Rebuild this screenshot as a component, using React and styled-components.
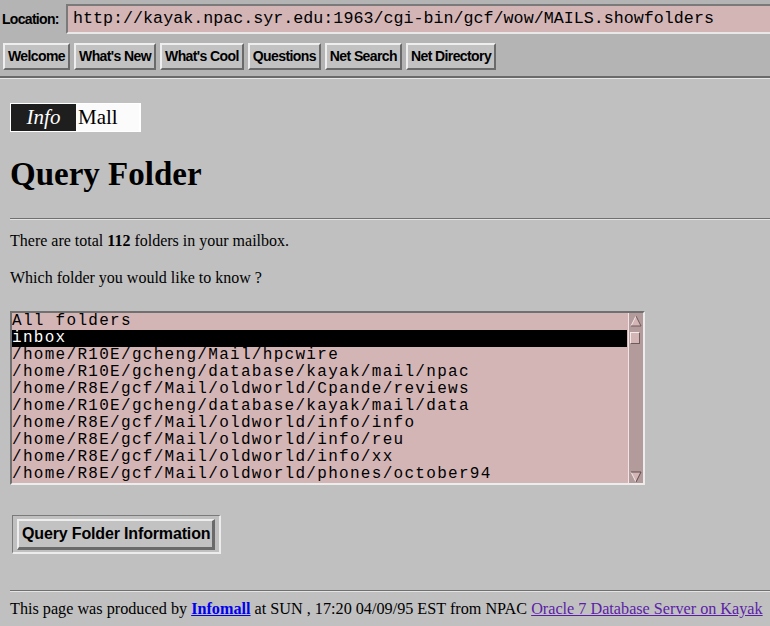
import React from "react";
import styled, { createGlobalStyle } from "styled-components";

const GlobalStyle = createGlobalStyle`
  html, body { margin: 0; padding: 0; background: #c0c0c0; }
  body { font-family: "Liberation Serif", "Times New Roman", serif; color: #000; overflow: hidden; }
`;

const folders = [
  "All folders",
  "inbox",
  "/home/R10E/gcheng/Mail/hpcwire",
  "/home/R10E/gcheng/database/kayak/mail/npac",
  "/home/R8E/gcf/Mail/oldworld/Cpande/reviews",
  "/home/R10E/gcheng/database/kayak/mail/data",
  "/home/R8E/gcf/Mail/oldworld/info/info",
  "/home/R8E/gcf/Mail/oldworld/info/reu",
  "/home/R8E/gcf/Mail/oldworld/info/xx",
  "/home/R8E/gcf/Mail/oldworld/phones/october94",
];

const navButtons = ["Welcome", "What's New", "What's Cool", "Questions", "Net Search", "Net Directory"];

const Chrome = styled.div`
  background: #b4b4b4;
  height: 76px;
  border-bottom: 2px solid #6a6a6a;
  box-shadow: 0 1px 0 #e6e6e6;
  overflow: hidden;
`;

const LocationRow = styled.div`
  display: flex;
  align-items: center;
  height: 38px;
  padding-left: 2px;
`;

const Label = styled.span`
  font-family: "Liberation Sans", Arial, sans-serif;
  font-weight: bold;
  font-size: 14px;
  letter-spacing: -0.7px;
  width: 64px;
`;

const UrlField = styled.div`
  flex: 1;
  height: 26px;
  margin-top: -1px;
  background: #d3b5b6;
  border-top: 2px solid #7a7a7a;
  border-left: 2px solid #7a7a7a;
  border-bottom: 2px solid #e8e8e8;
  font-family: "Liberation Mono", "Courier New", monospace;
  font-size: 16.7px;
  line-height: 26px;
  padding-left: 5px;
  white-space: nowrap;
`;

const ButtonRow = styled.div`
  display: flex;
  gap: 4px;
  padding: 5px 0 0 3px;
`;

const NavButton = styled.div`
  height: 23px;
  padding: 0 3px;
  background: #c2c2c2;
  border-top: 2px solid #eeeeee;
  border-left: 2px solid #eeeeee;
  border-bottom: 2px solid #6a6a6a;
  border-right: 2px solid #6a6a6a;
  font-family: "Liberation Sans", Arial, sans-serif;
  font-weight: bold;
  font-size: 14px;
  letter-spacing: -0.6px;
  line-height: 23px;
  white-space: nowrap;
`;

const Page = styled.div`
  padding: 25px 0 0 10px;
`;

const Logo = styled.div`
  display: inline-flex;
  height: 27px;
  border: 1px solid #fff;
  border-right-width: 2px;
  font-size: 21px;
  line-height: 27px;
`;

const LogoPart = styled.span`
  display: block;
  width: ${(p) => p.$w}px;
  background: ${(p) => (p.$dark ? "#1e1e1e" : "#fbfbfb")};
  color: ${(p) => (p.$dark ? "#fff" : "#000")};
  font-style: ${(p) => (p.$dark ? "italic" : "normal")};
  text-align: ${(p) => (p.$dark ? "center" : "left")};
  padding-left: ${(p) => (p.$dark ? 0 : 2)}px;
  box-sizing: border-box;
`;

const Title = styled.h1`
  margin: 23px 0 0;
  font-size: 33px;
  line-height: 38px;
  font-weight: bold;
`;

const Rule = styled.div`
  margin-top: ${(p) => p.$top}px;
  height: 1px;
  background: #707070;
  border-bottom: 1px solid #e4e4e4;
`;

const Para = styled.p`
  margin: ${(p) => p.$top}px 0 0;
  font-size: 16px;
  line-height: 17px;
`;

const ListBox = styled.div`
  margin-top: 25px;
  width: 631px;
  height: 170px;
  display: grid;
  grid-template-columns: 1fr 15px;
  background: #d3b5b6;
  border-top: 2px solid #707070;
  border-left: 2px solid #707070;
  border-bottom: 2px solid #ececec;
  border-right: 2px solid #ececec;
`;

const Options = styled.div`
  font-family: "Liberation Mono", "Courier New", monospace;
  font-size: 16px;
  letter-spacing: 1.3px;
  line-height: 17px;
  padding-right: 1px;
`;

const Option = styled.div`
  height: 17px;
  white-space: nowrap;
  overflow: hidden;
  background: ${(p) => (p.$selected ? "#000" : "transparent")};
  color: ${(p) => (p.$selected ? "#fff" : "#000")};
`;

const Scrollbar = styled.div`
  background: #b39b9c;
  border-left: 1px solid #f0e4e4;
  display: flex;
  flex-direction: column;
  justify-content: space-between;
  align-items: center;
`;

const Thumb = styled.div`
  width: 8px;
  height: 10px;
  margin-top: 1px;
  border: 1px solid #f4e8e8;
  border-right-color: #6e5a5a;
  border-bottom-color: #6e5a5a;
  background: #d3b5b6;
`;

const Arrow = ({ down }) => (
  <svg width="12" height="12" viewBox="0 0 12 12">
    {down ? (
      <>
        <polygon points="1,1 11,1 6,11" fill="#d3b5b6" />
        <polyline points="1,1 6,11" stroke="#f4e8e8" fill="none" />
        <polyline points="1,1 11,1 6,11" stroke="#5e4a4a" fill="none" />
      </>
    ) : (
      <>
        <polygon points="6,1 11,11 1,11" fill="#d3b5b6" />
        <polyline points="1,11 6,1" stroke="#f4e8e8" fill="none" />
        <polyline points="6,1 11,11 1,11" stroke="#6e5a5a" fill="none" />
      </>
    )}
  </svg>
);

const SubmitFrame = styled.div`
  display: inline-block;
  margin: 30px 0 0 2px;
  padding: 3px 4px 2px 4px;
  border-top: 1px solid #7a7a7a;
  border-left: 1px solid #7a7a7a;
  border-bottom: 2px solid #ececec;
  border-right: 2px solid #ececec;
`;

const SubmitButton = styled.div`
  height: 26px;
  padding: 0 2px 0 3px;
  background: #c2c2c2;
  border-top: 2px solid #eeeeee;
  border-left: 2px solid #eeeeee;
  border-bottom: 3px solid #6a6a6a;
  border-right: 3px solid #6a6a6a;
  font-family: "Liberation Sans", Arial, sans-serif;
  font-weight: bold;
  font-size: 16px;
  letter-spacing: -0.15px;
  line-height: 26px;
  white-space: nowrap;
`;

const Footer = styled.p`
  margin: 9px 0 0;
  font-size: 16.2px;
  line-height: 17px;
  white-space: nowrap;
`;

const Link = styled.a`
  color: ${(p) => (p.$visited ? "#5c1ea8" : "#0000ee")};
  font-weight: ${(p) => (p.$bold ? "bold" : "normal")};
  text-decoration: underline;
`;

export default function App() {
  return (
    <>
      <GlobalStyle />
      <Chrome>
        <LocationRow>
          <Label>Location:</Label>
          <UrlField>http://kayak.npac.syr.edu:1963/cgi-bin/gcf/wow/MAILS.showfolders</UrlField>
        </LocationRow>
        <ButtonRow>
          {navButtons.map((b) => (
            <NavButton key={b}>{b}</NavButton>
          ))}
        </ButtonRow>
      </Chrome>
      <Page>
        <Logo>
          <LogoPart $dark $w={65}>Info</LogoPart>
          <LogoPart $w={63}>Mall</LogoPart>
        </Logo>
        <Title>Query Folder</Title>
        <Rule $top={25} />
        <Para $top={12}>
          There are total <b>112</b> folders in your mailbox.
        </Para>
        <Para $top={20}>Which folder you would like to know ?</Para>
        <ListBox>
          <Options>
            {folders.map((f, i) => (
              <Option key={f} $selected={i === 1}>
                {f}
              </Option>
            ))}
          </Options>
          <Scrollbar>
            <div>
              <Arrow />
              <Thumb />
            </div>
            <Arrow down />
          </Scrollbar>
        </ListBox>
        <SubmitFrame>
          <SubmitButton>Query Folder Information</SubmitButton>
        </SubmitFrame>
        <Rule $top={36} />
        <Footer>
          This page was produced by <Link href="#" $bold>Infomall</Link> at SUN , 17:20 04/09/95 EST from NPAC{" "}
          <Link href="#" $visited>Oracle 7 Database Server on Kayak</Link>
        </Footer>
      </Page>
    </>
  );
}
